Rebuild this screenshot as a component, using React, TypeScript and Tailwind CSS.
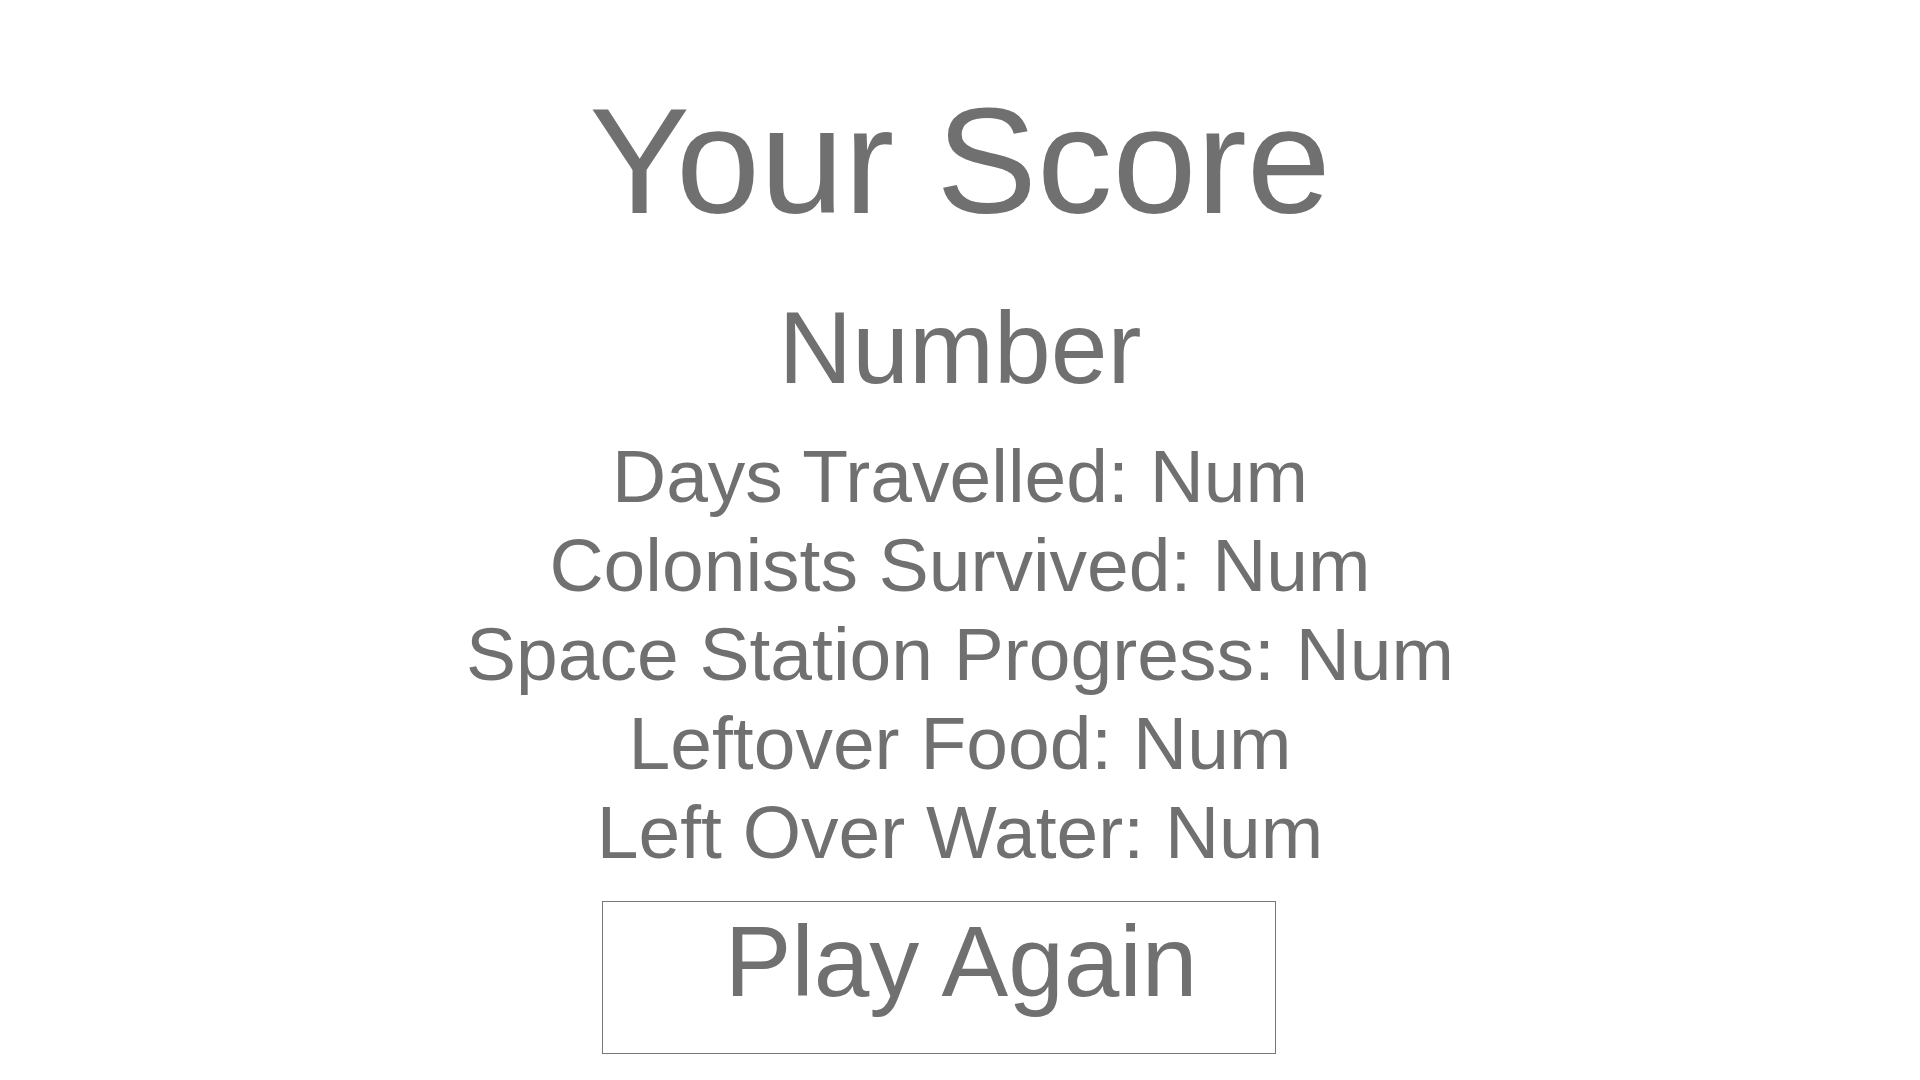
import React from "react";

const stats = [
  "Days Travelled: Num",
  "Colonists Survived: Num",
  "Space Station Progress: Num",
  "Leftover Food: Num",
  "Left Over Water: Num",
];

export default function App() {
  return (
    <div className="min-h-screen w-full bg-white flex flex-col items-center text-[#707070] font-['Liberation_Sans',Arial,sans-serif]">
      {/* Title */}
      <h1 className="mt-[85px] text-[151px] leading-none">Your Score</h1>

      {/* Score value */}
      <div className="mt-[61px] text-[102px] leading-none">Number</div>

      {/* Stats list */}
      <div className="mt-[33px] flex flex-col items-center text-[75px] leading-[89px]">
        {stats.map((s) => (
          <div key={s}>{s}</div>
        ))}
      </div>

      {/* Play again button */}
      <button className="mt-[24px] mr-[42px] w-[674px] h-[153px] border border-[#777] pl-[44px] pt-[9px] flex justify-center items-start text-[100px] leading-none text-[#707070]">
        Play Again
      </button>
    </div>
  );
}
